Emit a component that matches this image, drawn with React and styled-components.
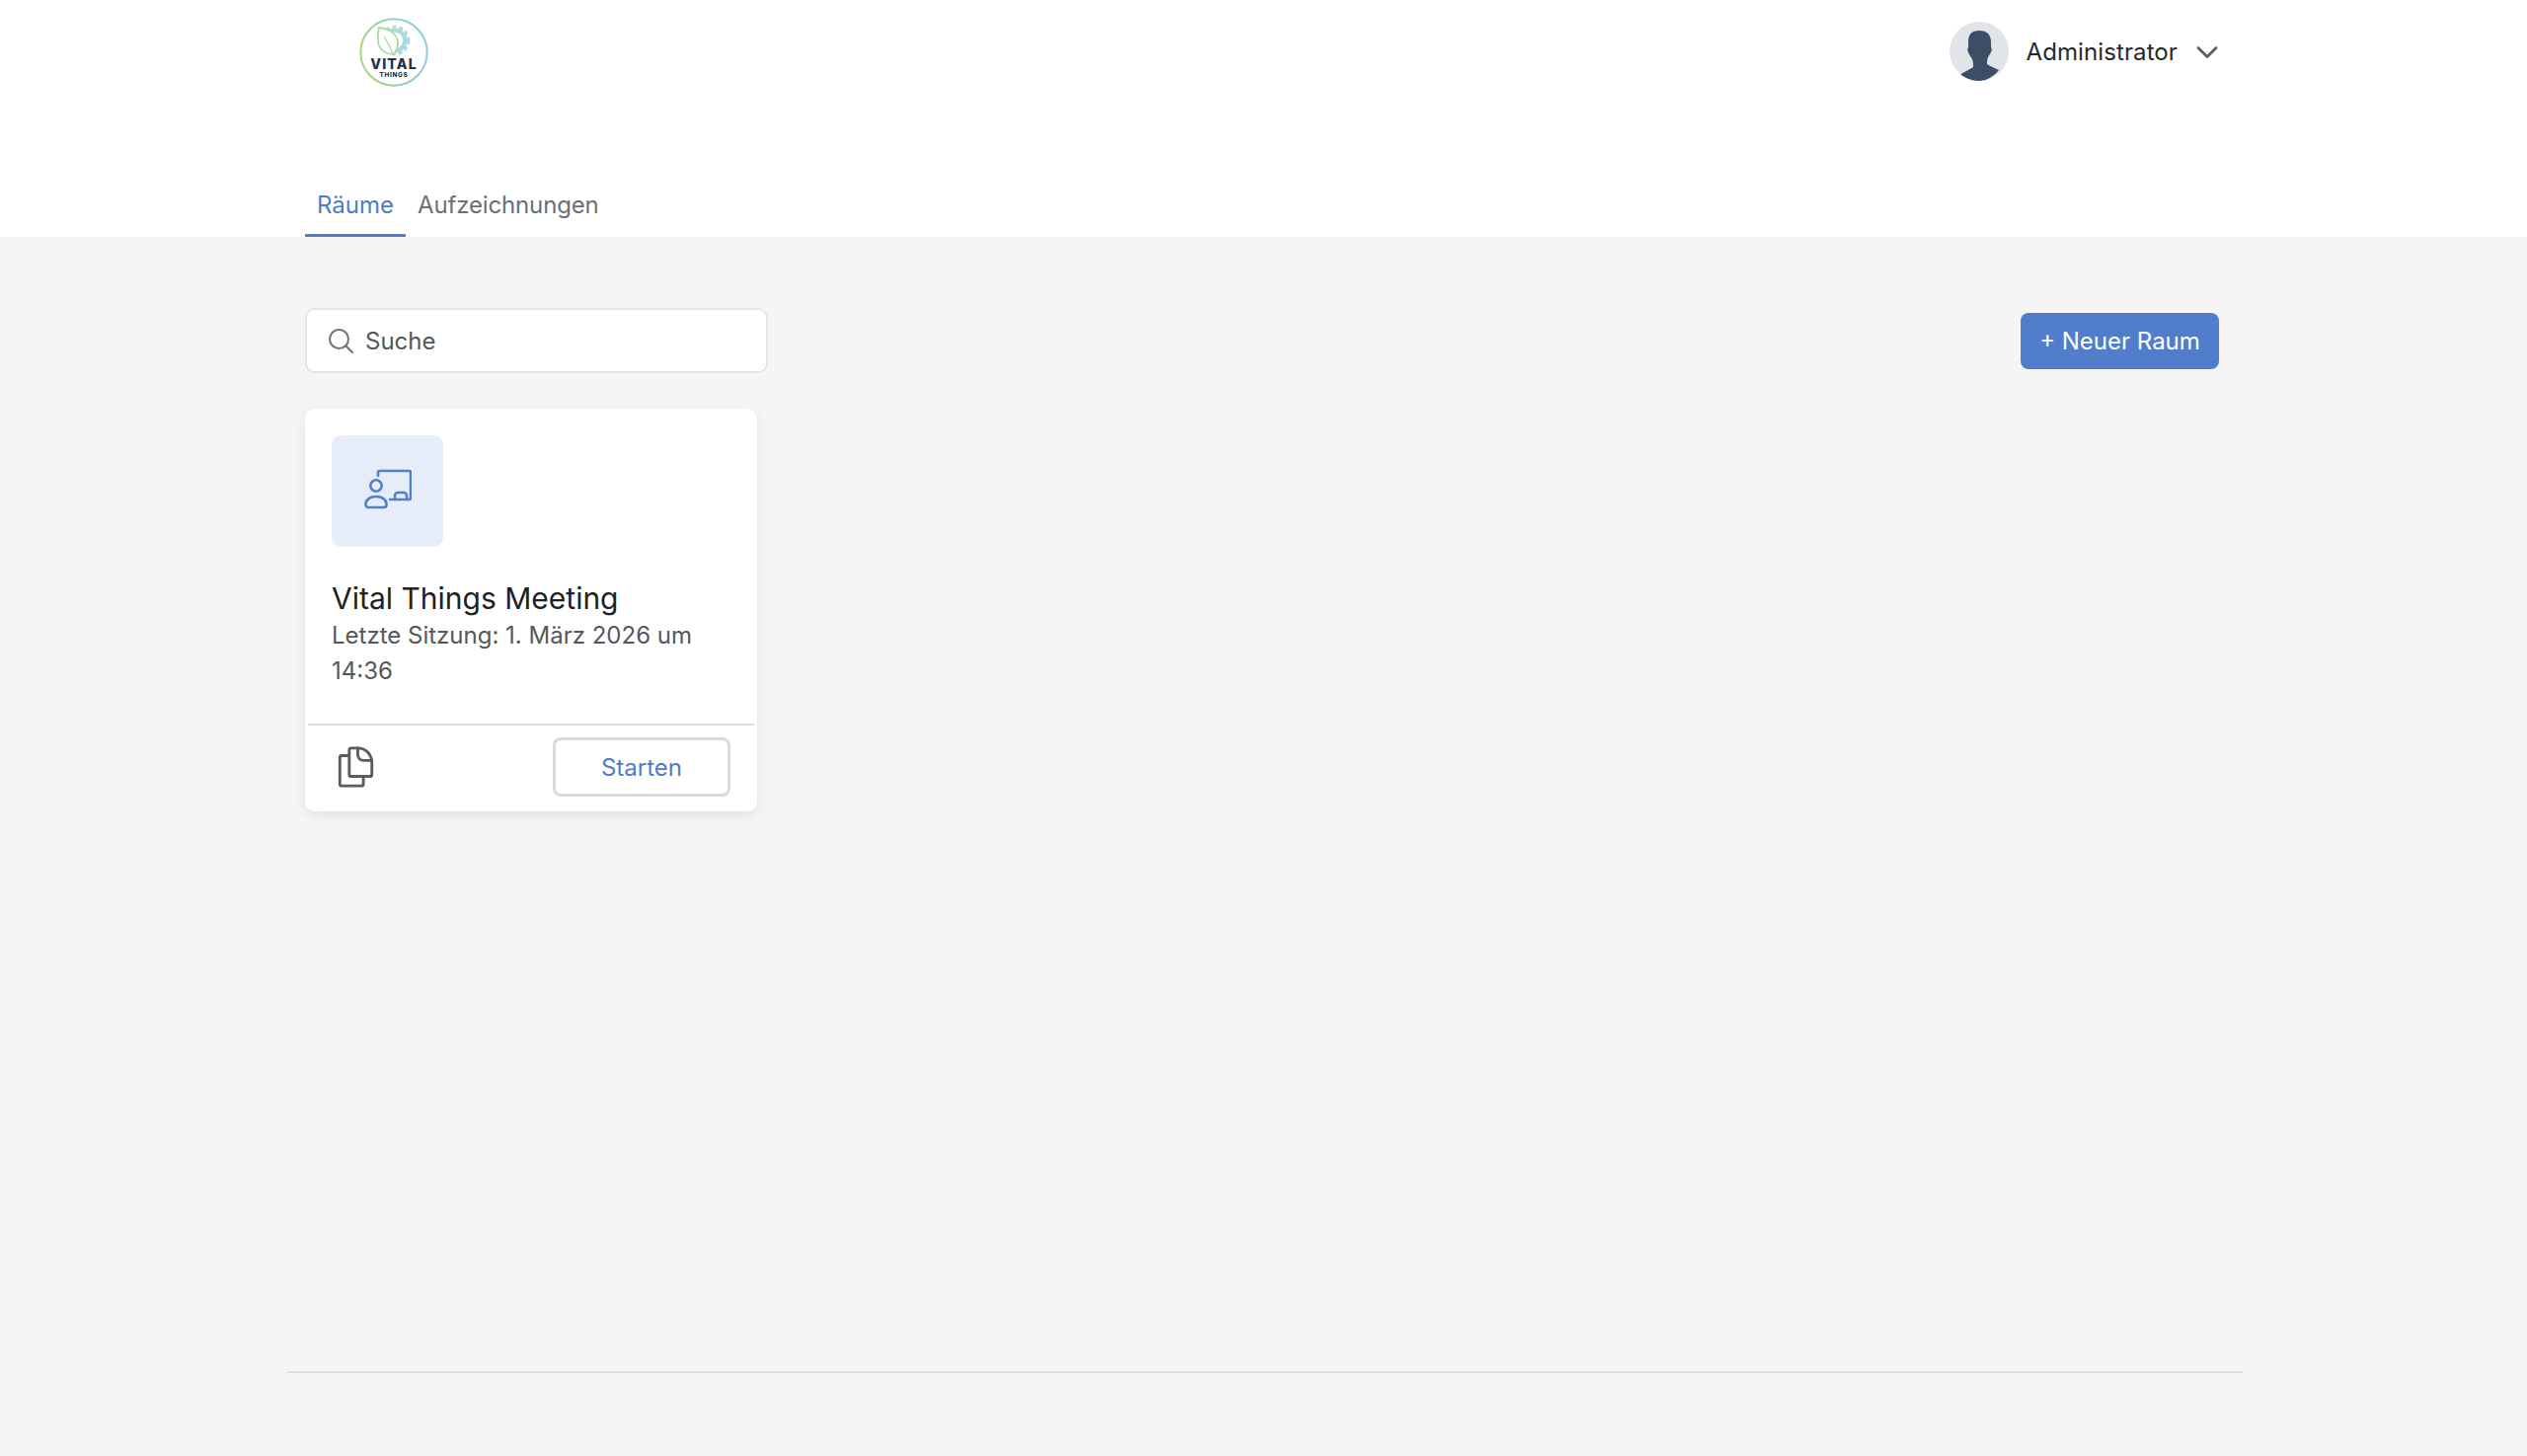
import React from 'react';
import styled, { createGlobalStyle } from 'styled-components';
import { ChevronDown } from 'lucide-react';

const GlobalStyle = createGlobalStyle`
  html, body {
    margin: 0;
    padding: 0;
    background: #f5f5f5;
    font-family: Inter, "Noto Sans", sans-serif;
    color: #1f2023;
  }
  * { box-sizing: border-box; }
`;

const Page = styled.div`
  min-height: 1475px;
  display: flex;
  flex-direction: column;
`;

const Header = styled.header`
  background: #fff;
  height: 240px;
`;

const HeaderInner = styled.div`
  width: 1939px;
  margin-left: 309px;
  height: 100%;
  display: flex;
  flex-direction: column;
`;

const TopBar = styled.div`
  height: 106px;
  display: flex;
  align-items: flex-start;
  justify-content: space-between;
`;

const LogoLink = styled.a`
  display: block;
  margin: 18px 0 0 55px;
  width: 70px;
  height: 70px;
`;

const UserMenu = styled.div`
  display: flex;
  align-items: center;
  height: 60px;
  margin-top: 22px;
`;

const Avatar = styled.svg`
  width: 60px;
  height: 60px;
  border-radius: 50%;
  display: block;
`;

const UserName = styled.span`
  margin-left: 18px;
  font-size: 24px;
  letter-spacing: 0.1px;
  color: #26282b;
`;

const Caret = styled(ChevronDown)`
  margin: 2px -6px 0 12px;
  color: #5b5d60;
`;

const Tabs = styled.nav`
  margin-top: auto;
  display: flex;
`;

const Tab = styled.a`
  height: 60px;
  padding: 0 12px 3px;
  display: flex;
  align-items: center;
  font-size: 24px;
  letter-spacing: ${({ $active }) => ($active ? '0' : '-0.15px')};
  color: ${({ $active }) => ($active ? '#4f7cc9' : '#6b7075')};
  border-bottom: 3px solid ${({ $active }) => ($active ? '#527dcb' : 'transparent')};
`;

const Main = styled.main`
  flex: 1;
  width: 1939px;
  margin-left: 309px;
`;

const Toolbar = styled.div`
  margin-top: 72px;
  height: 66px;
  display: flex;
  align-items: center;
  justify-content: space-between;
`;

const Search = styled.div`
  width: 469px;
  height: 66px;
  background: #fff;
  border: 2px solid #e3e5ea;
  border-radius: 10px;
  display: flex;
  align-items: center;
  padding-left: 22px;
  gap: 12px;
`;

const SearchText = styled.span`
  font-size: 24px;
  color: #55575a;
`;

const NewButton = styled.button`
  width: 201px;
  height: 57px;
  border: none;
  border-radius: 8px;
  background: #527dcb;
  color: #fff;
  font-family: inherit;
  font-size: 24px;
`;

const Card = styled.article`
  margin-top: 36px;
  width: 458px;
  height: 408px;
  background: #fff;
  border-radius: 10px;
  box-shadow: 0 4px 12px rgba(0, 0, 0, 0.08);
  display: flex;
  flex-direction: column;
`;

const CardBody = styled.div`
  flex: 1;
  padding: 27px 27px 0;
`;

const IconBox = styled.div`
  width: 113px;
  height: 113px;
  padding-bottom: 3px;
  border-radius: 10px;
  background: #e7edf8;
  display: flex;
  align-items: center;
  justify-content: center;
`;

const CardTitle = styled.h2`
  margin: 33px 0 0;
  font-size: 30px;
  line-height: 38px;
  font-weight: 400;
  color: #1f2023;
`;

const CardMeta = styled.p`
  margin: 1px 0 0;
  font-size: 24px;
  line-height: 36px;
  color: #55575a;
`;

const CardFooter = styled.div`
  height: 89px;
  margin: 0 3px;
  border-top: 2px solid #dcdcdc;
  display: flex;
  align-items: center;
  justify-content: space-between;
  padding: 0 24px 3px 30px;
`;

const StartButton = styled.button`
  width: 180px;
  height: 60px;
  background: #fff;
  border: 3px solid #dadada;
  border-radius: 8px;
  color: #4f7cc9;
  font-family: inherit;
  font-size: 24px;
`;

const Footer = styled.footer`
  width: 1981px;
  margin: 0 0 84px 291px;
  border-top: 2px solid #dcdee3;
`;

const VitalLogo = () => (
  <svg width="70" height="70" viewBox="0 0 70 70">
    <defs>
      <linearGradient id="ring" x1="0" y1="0.6" x2="1" y2="0.4">
        <stop offset="0" stopColor="#a6d67f" />
        <stop offset="1" stopColor="#8ccbe0" />
      </linearGradient>
      <linearGradient id="gear" x1="0" y1="0" x2="1" y2="1">
        <stop offset="0" stopColor="#b5e0cf" />
        <stop offset="1" stopColor="#a3d6e8" />
      </linearGradient>
    </defs>
    <circle cx="35" cy="35" r="33.7" fill="#fff" stroke="url(#ring)" strokeWidth="2" />
    <circle cx="36" cy="23" r="10.5" fill="none" stroke="url(#gear)" strokeWidth="4.5" />
    <circle cx="36" cy="23" r="14" fill="none" stroke="url(#gear)" strokeWidth="2.6" strokeDasharray="4 3" />
    <path d="M20 10c10 1 19 6 19 16 0 4-2 8-4 11-8 0-15-4-16-13-.4-5 0-10 1-14z" fill="#fff" stroke="#add9a6" strokeWidth="1.8" />
    <path d="M25 19c3 5 7 11 9 18" fill="none" stroke="#add9a6" strokeWidth="1.3" />
    <text x="35" y="52" textAnchor="middle" fontFamily="Inter, sans-serif" fontWeight="800" fontSize="14" letterSpacing="1.2" fill="#23323f">VITAL</text>
    <text x="35" y="59.500" textAnchor="middle" fontFamily="Inter, sans-serif" fontWeight="800" fontSize="6.400" letterSpacing="0.7" fill="#23323f">THINGS</text>
  </svg>
);

const UserSilhouette = () => (
  <Avatar viewBox="0 0 60 60">
    <rect width="60" height="60" fill="#e1e4e9" />
    <path d="M30 9c8 0 12 4 12 12v5c1 1 1 3 0 5-1 2-2 3-3 5-1 3-1 5-1 7 3 2 8 4 12 6-5 6-12 11-20 11S15 58 10 54c4-3 10-5 14-8 0-3 0-5-1-8-1-2-3-4-4-7-1-2-1-4 0-5v-5C19 13 22 9 30 9z" fill="#3c4d66" />
  </Avatar>
);

const SearchIcon = () => (
  <svg width="25" height="25" viewBox="0 0 25 25" fill="none" stroke="#6e7073" strokeWidth="2" strokeLinecap="round">
    <circle cx="10.500" cy="10.500" r="9.500" />
    <path d="M17.500 17.500l6.500 6.500" />
  </svg>
);

const PresenterIcon = () => (
  <svg width="48" height="42" viewBox="0 0 48 42" fill="none" stroke="#5380cd" strokeWidth="2.600" strokeLinecap="round" strokeLinejoin="round">
    <path d="M14 7V3.500A1.500 1.500 0 0 1 15.500 2h30A1.500 1.500 0 0 1 47 3.500v26a1.500 1.500 0 0 1-1.500 1.500H26" />
    <path d="M31 31v-4a3 3 0 0 1 3-3h6a3 3 0 0 1 3 3v4" />
    <circle cx="12" cy="17" r="5.700" />
    <path d="M1.500 36c0-5 4.500-8 10.500-8s10.500 3 10.500 8c0 2-1 3-2.500 3H4c-1.500 0-2.500-1-2.500-3z" />
  </svg>
);

const CopyIcon = () => (
  <svg width="37" height="42" viewBox="0 0 38 44" fill="none" stroke="#5a5c60" strokeWidth="3" strokeLinejoin="round" strokeLinecap="round">
    <path d="M12 10H4a2 2 0 0 0-2 2v28a2 2 0 0 0 2 2h21a2 2 0 0 0 2-2v-8" />
    <path d="M14 2h7c9 0 15 7 15 16v12a2 2 0 0 1-2 2H14a2 2 0 0 1-2-2V4a2 2 0 0 1 2-2z" />
    <path d="M21 2v7a6 6 0 0 0 6 6h9" />
  </svg>
);

const App = () => {
  return (
    <Page>
      <GlobalStyle />
      <Header>
        <HeaderInner>
          <TopBar>
            <LogoLink>
              <VitalLogo />
            </LogoLink>
            <UserMenu>
              <UserSilhouette />
              <UserName>Administrator</UserName>
              <Caret size={36} strokeWidth={1.8} />
            </UserMenu>
          </TopBar>
          <Tabs>
            <Tab $active>Räume</Tab>
            <Tab>Aufzeichnungen</Tab>
          </Tabs>
        </HeaderInner>
      </Header>
      <Main>
        <Toolbar>
          <Search>
            <SearchIcon />
            <SearchText>Suche</SearchText>
          </Search>
          <NewButton>+ Neuer Raum</NewButton>
        </Toolbar>
        <Card>
          <CardBody>
            <IconBox>
              <PresenterIcon />
            </IconBox>
            <CardTitle>Vital Things Meeting</CardTitle>
            <CardMeta>Letzte Sitzung: 1. März 2026 um 14:36</CardMeta>
          </CardBody>
          <CardFooter>
            <CopyIcon />
            <StartButton>Starten</StartButton>
          </CardFooter>
        </Card>
      </Main>
      <Footer />
    </Page>
  );
};

export default App;
